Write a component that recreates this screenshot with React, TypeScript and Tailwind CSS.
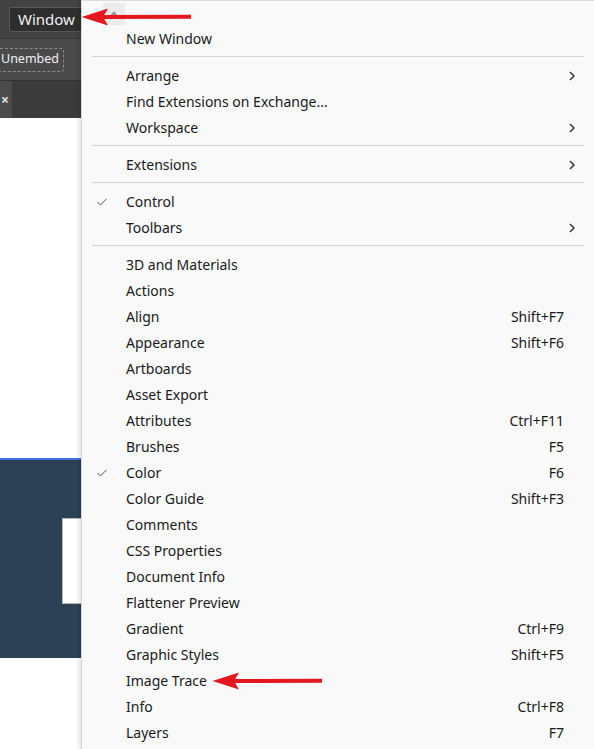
import React from "react";

type Item =
  | { kind: "sep" }
  | { kind: "item"; label: string; shortcut?: string; sub?: boolean; checked?: boolean };

const items: Item[] = [
  { kind: "item", label: "New Window" },
  { kind: "sep" },
  { kind: "item", label: "Arrange", sub: true },
  { kind: "item", label: "Find Extensions on Exchange..." },
  { kind: "item", label: "Workspace", sub: true },
  { kind: "sep" },
  { kind: "item", label: "Extensions", sub: true },
  { kind: "sep" },
  { kind: "item", label: "Control", checked: true },
  { kind: "item", label: "Toolbars", sub: true },
  { kind: "sep" },
  { kind: "item", label: "3D and Materials" },
  { kind: "item", label: "Actions" },
  { kind: "item", label: "Align", shortcut: "Shift+F7" },
  { kind: "item", label: "Appearance", shortcut: "Shift+F6" },
  { kind: "item", label: "Artboards" },
  { kind: "item", label: "Asset Export" },
  { kind: "item", label: "Attributes", shortcut: "Ctrl+F11" },
  { kind: "item", label: "Brushes", shortcut: "F5" },
  { kind: "item", label: "Color", shortcut: "F6", checked: true },
  { kind: "item", label: "Color Guide", shortcut: "Shift+F3" },
  { kind: "item", label: "Comments" },
  { kind: "item", label: "CSS Properties" },
  { kind: "item", label: "Document Info" },
  { kind: "item", label: "Flattener Preview" },
  { kind: "item", label: "Gradient", shortcut: "Ctrl+F9" },
  { kind: "item", label: "Graphic Styles", shortcut: "Shift+F5" },
  { kind: "item", label: "Image Trace" },
  { kind: "item", label: "Info", shortcut: "Ctrl+F8" },
  { kind: "item", label: "Layers", shortcut: "F7" },
];

function Arrow({ className }: { className: string }) {
  return (
    <svg className={className} width="112" height="22" viewBox="0 0 112 22">
      <path d="M20 9 L110 8.8 L110 12.8 L20 13 Z" fill="#e3171d" />
      <path d="M0.5 11 L27 2.5 L22 11 L27 19.5 Z" fill="#e3171d" />
    </svg>
  );
}

export default function App() {
  return (
    <div
      className="relative w-[594px] h-[749px] overflow-hidden flex bg-white"
      style={{ fontFamily: '"Noto Sans", "Open Sans", sans-serif' }}
    >
      {/* Left app area */}
      <div className="w-[81px] shrink-0 flex flex-col">
        <div className="h-[38px] bg-[#434343] flex items-center pl-[9px]">
          <div className="h-[25px] px-[8px] bg-[#2e2e2e] border border-[#575757] rounded-[2px] flex items-center text-[15px] text-[#f0f0f0]">
            Window
          </div>
        </div>
        <div className="h-[42px] bg-[#4a4a4a] border-t border-[#3a3a3a] flex items-center">
          <div className="h-[24px] w-[64px] border border-dashed border-[#8a8a8a] border-l-0 rounded-r-[3px] flex items-center justify-start pl-[1px] text-[12.5px] text-[#f2f2f2] whitespace-nowrap">
            Unembed
          </div>
        </div>
        <div className="h-[38px] bg-[#3b3b3b] border-t border-[#333] flex">
          <div className="w-[12px] h-full bg-[#4b4b4b] flex items-center justify-start pl-[1px] text-[#e0e0e0] text-[14px] font-bold leading-none">
            <span>×</span>
          </div>
        </div>
        <div className="h-[340px] bg-white" />
        <div className="h-[200px] bg-[#2c4155] border-t-[2px] border-[#3d6fe0] flex items-start pt-[58px] justify-end">
          <div className="w-[19px] h-[86px] bg-white border border-[#b9b9b9] border-r-0" />
        </div>
        <div className="flex-1 bg-white" />
      </div>

      {/* Menu */}
      <div className="flex-1 bg-[#f9f9f9] border-l border-[#d8d8d8] border-t border-t-[#dcdcdc] shadow-[-2px_0_4px_rgba(0,0,0,0.12)] relative">
        <div className="h-[25px] flex items-start pl-[21px] pt-[2px]">
          <div className="w-[22px] h-[22px] bg-[#ececec] flex items-center justify-center">
            <svg width="10" height="6" viewBox="0 0 10 6">
              <path d="M0 6 L5 0 L10 6 Z" fill="#9a9a9a" />
            </svg>
          </div>
        </div>
        <div className="flex flex-col">
          {items.map((it, i) =>
            it.kind === "sep" ? (
              <div key={i} className="h-[11px] pt-[4px] pl-[10px] pr-[10px]">
                <div className="h-px bg-[#d6d6d6]" />
              </div>
            ) : (
              <div key={i} className="h-[26px] flex items-center text-[14px] text-[#1a1a1a] pb-[2px]">
                <div className="w-[44px] shrink-0 flex justify-start pl-[15px] pt-[2px]">
                  {it.checked && (
                    <svg width="10" height="8" viewBox="0 0 10 8">
                      <path d="M0.5 4 L3.5 7 L9.5 0.8" stroke="#555" strokeWidth="1" fill="none" />
                    </svg>
                  )}
                </div>
                <span className="flex-1 whitespace-nowrap">{it.label}</span>
                <span className="w-[100px] text-right whitespace-nowrap">{it.shortcut ?? ""}</span>
                <div className="w-[30px] shrink-0 flex justify-start pl-[5px] pt-[2px]">
                  {it.sub && (
                    <svg width="6" height="10" viewBox="0 0 6 10">
                      <path d="M1 1 L5 5 L1 9" stroke="#333" strokeWidth="1.5" fill="none" />
                    </svg>
                  )}
                </div>
              </div>
            )
          )}
        </div>
      </div>

      <Arrow className="absolute left-[81px] top-[6px]" />
      <Arrow className="absolute left-[212px] top-[670px]" />
    </div>
  );
}
